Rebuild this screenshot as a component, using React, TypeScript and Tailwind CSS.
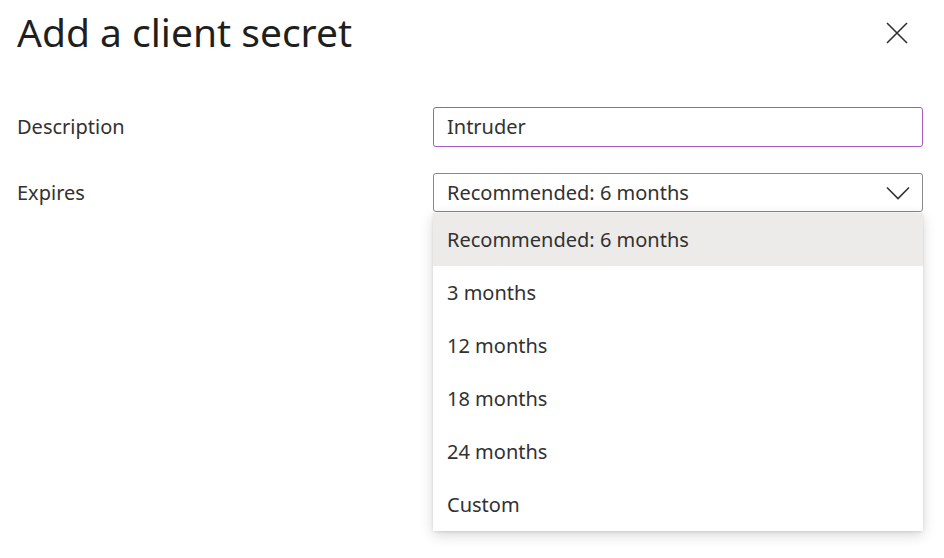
import { useState } from "react";

const options = ["Recommended: 6 months", "3 months", "12 months", "18 months", "24 months", "Custom"];

export default function App() {
  const [selected] = useState(options[0]);

  return (
    <div
      className="relative h-[558px] w-[944px] overflow-hidden bg-white text-[#323130]"
      style={{ fontFamily: '"Noto Sans", "Open Sans", sans-serif' }}
    >
      <div className="flex items-start justify-between pl-[17px] pr-[34px] pt-[6px]">
        <h1 className="text-[39px] leading-[52px] font-normal text-[#201f1e]">Add a client secret</h1>
        <button className="mt-[14px] flex h-[26px] w-[26px] items-center justify-center text-[#323130]">
          <svg width="22" height="22" viewBox="0 0 22 22" fill="none" stroke="currentColor" strokeWidth="1.6">
            <path d="M1 1L21 21M21 1L1 21" />
          </svg>
        </button>
      </div>

      <div className="mt-[49px] flex flex-col gap-[26px] pl-[17px] pr-[21px]">
        <div className="flex items-center">
          <label className="w-[416px] text-[20px]">Description</label>
          <div className="flex h-[40px] flex-1 items-center rounded-[3px] border border-[#a45ac7] px-[13px] text-[20px]">
            Intruder
          </div>
        </div>

        <div className="flex items-start">
          <label className="w-[416px] pt-[5px] text-[20px]">Expires</label>
          <div className="relative flex-1">
            <div className="flex h-[39px] items-center justify-between rounded-[3px] border border-[#8a8886] pl-[13px] pr-[12px] text-[20px]">
              <span>{selected}</span>
              <svg width="24" height="14" viewBox="0 0 24 14" fill="none" stroke="currentColor" strokeWidth="1.6">
                <path d="M1 1.5L12 12.5L23 1.5" />
              </svg>
            </div>
            <ul className="absolute left-0 right-0 top-[40px] rounded-b-[3px] bg-white shadow-[0_4px_14px_rgba(0,0,0,0.16),0_1px_3px_rgba(0,0,0,0.1)]">
              {options.map((o) => (
                <li
                  key={o}
                  className={`flex h-[53px] items-center px-[14px] text-[20px] ${
                    o === selected ? "bg-[#edebe9]" : "bg-white"
                  }`}
                >
                  {o}
                </li>
              ))}
            </ul>
          </div>
        </div>
      </div>
    </div>
  );
}
